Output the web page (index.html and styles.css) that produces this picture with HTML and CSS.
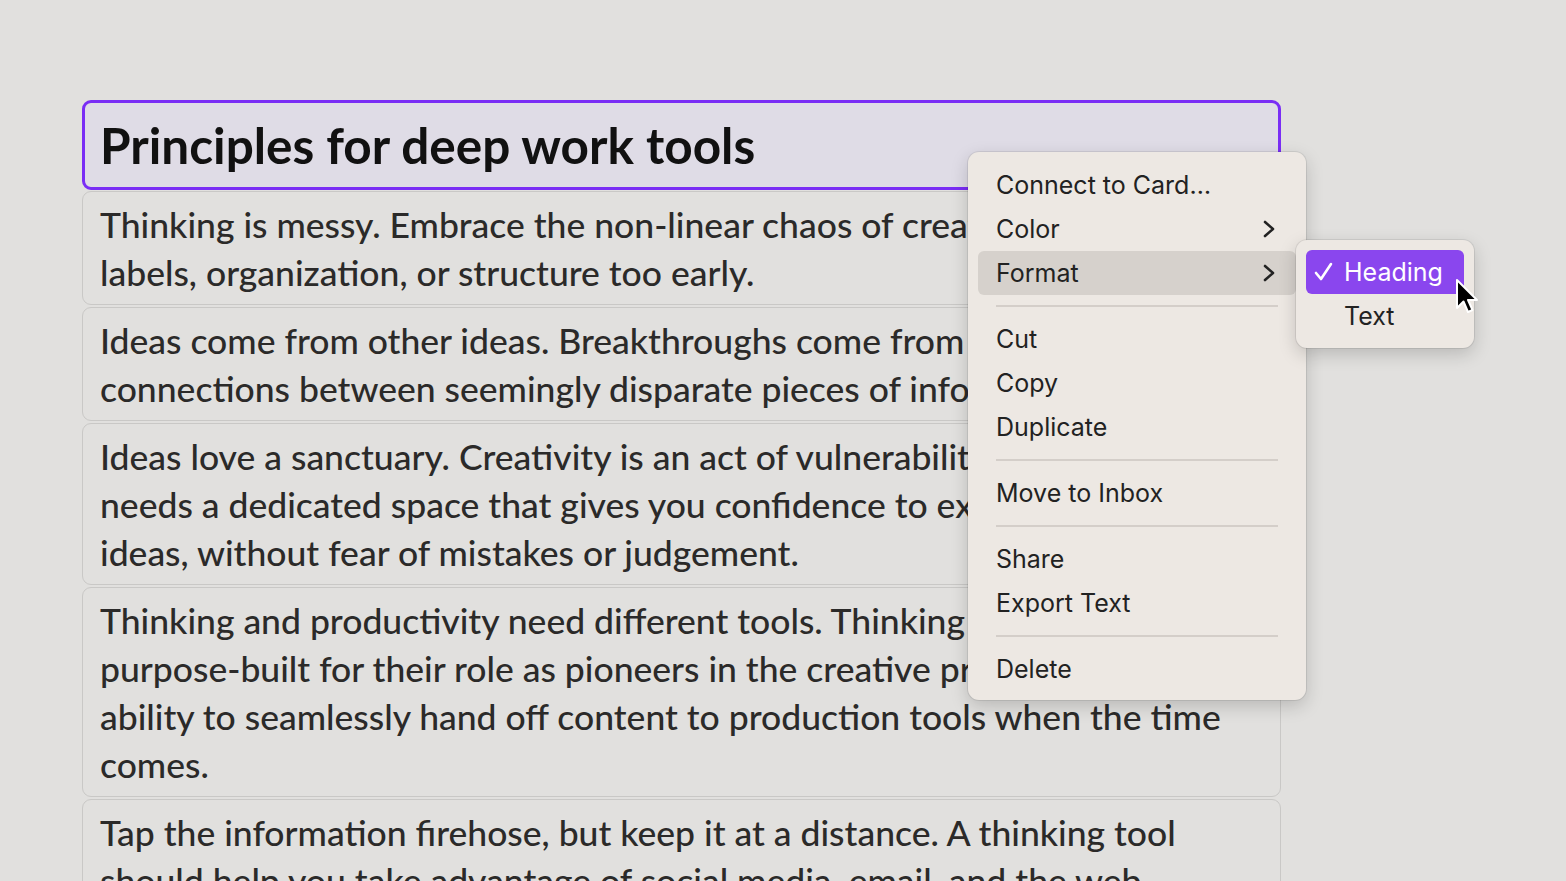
FILE: index.html
```html
<!DOCTYPE HTML>
<html>
<head>
	<meta charset="utf-8"/>
	<title>Principles for deep work tools</title>
	<link rel="stylesheet" href="styles.css">
</head>
<body>
	<div id="stack">
		<div class="card heading">
			<p>Principles for deep work tools</p>
		</div>
		<div class="card">
			<p>Thinking is messy. Embrace the non-linear chaos of creativity. Don't impose<br>labels, organization, or structure too early.</p>
		</div>
		<div class="card">
			<p>Ideas come from other ideas. Breakthroughs come from making<br>connections between seemingly disparate pieces of information.</p>
		</div>
		<div class="card">
			<p>Ideas love a sanctuary. Creativity is an act of vulnerability. Your mind<br>needs a dedicated space that gives you confidence to explore<br>ideas, without fear of mistakes or judgement.</p>
		</div>
		<div class="card">
			<p>Thinking and productivity need different tools. Thinking tools should be<br>purpose-built for their role as pioneers in the creative process, with the<br>ability to seamlessly hand off content to production tools when the time<br>comes.</p>
		</div>
		<div class="card">
			<p>Tap the information firehose, but keep it at a distance. A thinking tool<br>should help you take advantage of social media, email, and the web<br>without being overwhelmed by them.</p>
		</div>
	</div>

	<div id="menu" class="menu">
		<div class="item">Connect to Card…</div>
		<div class="item">Color
			<svg class="chevron" width="14" height="18" viewBox="0 0 14 18"><polyline points="3,2 11,9 3,16"/></svg>
		</div>
		<div class="item active">Format
			<svg class="chevron" width="14" height="18" viewBox="0 0 14 18"><polyline points="3,2 11,9 3,16"/></svg>
		</div>
		<div class="sep"></div>
		<div class="item">Cut</div>
		<div class="item">Copy</div>
		<div class="item">Duplicate</div>
		<div class="sep"></div>
		<div class="item">Move to Inbox</div>
		<div class="sep"></div>
		<div class="item">Share</div>
		<div class="item">Export Text</div>
		<div class="sep"></div>
		<div class="item">Delete</div>
	</div>

	<div id="submenu" class="menu">
		<div class="item selected">
			<svg class="check" width="22" height="22" viewBox="0 0 22 22"><polyline points="3,12 8,18 18,3"/></svg>
			Heading
		</div>
		<div class="item">Text</div>
	</div>

	<svg id="cursor" width="26" height="40" viewBox="0 0 26 40">
		<path d="M2,2 L2,30 L8.5,23.5 L13,34 L17.5,32 L13,22 L22,22 Z"/>
	</svg>
</body>
</html>
```

FILE: styles.css
```css
body {
	margin: 0;
	background-color: #e1e0de;
	font-family: Lato, "Noto Sans", sans-serif;
	overflow: hidden;
	height: 881px;
}
p {
	margin: 0;
}
#stack {
	display: flex;
	flex-direction: column;
	gap: 2px;
	width: 1199px;
	margin-left: 82px;
	padding-top: 100px;
}
.card {
	border: 1px solid #c9c8c6;
	border-radius: 9px;
	padding: 9px 17px 7px;
	font-size: 35.5px;
	font-weight: 500;
	line-height: 48px;
	color: #2b2a29;
	white-space: nowrap;
	overflow: hidden;
}
.card.heading {
	border: 3px solid #7a2df5;
	background-color: #dfdce6;
	padding: 0 15px;
	height: 84px;
	display: flex;
	align-items: center;
	font-size: 49.5px;
	font-weight: bold;
	color: #111;
	margin-bottom: -1px;
}
.menu {
	position: absolute;
	background-color: #ede8e3;
	border-radius: 11px;
	box-shadow: 0 0 0 1px rgba(0, 0, 0, 0.08), 0 6px 18px rgba(0, 0, 0, 0.18);
	font-family: Inter, "Liberation Sans", sans-serif;
	font-size: 25px;
	color: #222;
}
#menu {
	left: 968px;
	top: 152px;
	width: 318px;
	padding: 11px 10px 9px;
}
.item {
	height: 44px;
	display: flex;
	align-items: center;
	padding-left: 18px;
	border-radius: 6px;
	position: relative;
}
.item.active {
	background-color: #d6d1cc;
}
.chevron {
	position: absolute;
	right: 20px;
	top: 13px;
	fill: none;
	stroke: #222;
	stroke-width: 2.6;
	stroke-linecap: round;
	stroke-linejoin: round;
}
.sep {
	height: 2px;
	margin: 10px 18px;
	background-color: #d4cec9;
}
#submenu {
	left: 1296px;
	top: 240px;
	width: 158px;
	padding: 10px;
}
#submenu .item {
	padding-left: 38px;
}
#submenu .item.selected {
	background-color: #8a46ee;
	color: #fff;
}
.check {
	position: absolute;
	left: 7px;
	top: 11px;
	fill: none;
	stroke: #fff;
	stroke-width: 2.6;
	stroke-linecap: round;
	stroke-linejoin: round;
}
#cursor {
	position: absolute;
	left: 1455px;
	top: 278px;
}
#cursor path {
	fill: #000;
	stroke: #fff;
	stroke-width: 2;
	stroke-linejoin: round;
}
```
